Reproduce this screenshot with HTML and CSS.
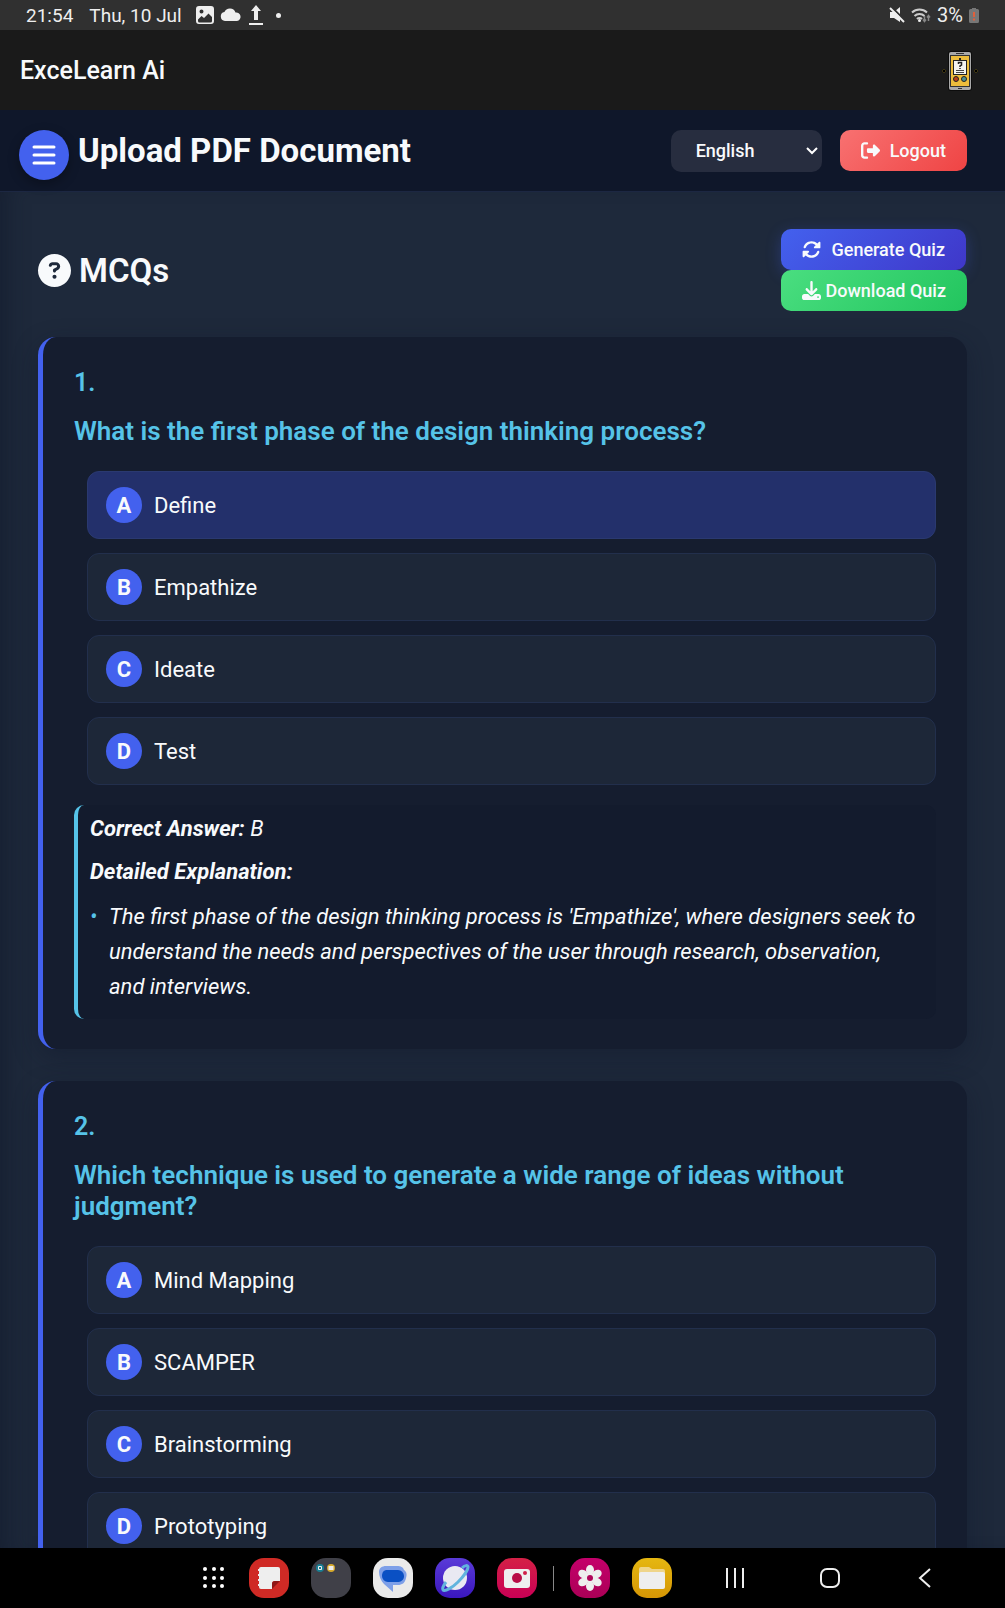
FILE: index.html
```html
<!DOCTYPE html>
<html lang="en">
<head>
    <meta charset="UTF-8">
    <meta name="viewport" content="width=device-width, initial-scale=1.0">
    <title>ExceLearn Ai</title>
    <link rel="stylesheet" href="styles.css">
</head>
<body>

    <!-- Status bar -->
    <div class="status-bar">
        <span>21:54</span>
        <span class="date">Thu, 10 Jul</span>
        <svg width="18" height="18" viewBox="0 0 18 18"><path fill="#eee" fill-rule="evenodd" d="M3 0h12a3 3 0 0 1 3 3v12a3 3 0 0 1-3 3H3a3 3 0 0 1-3-3V3a3 3 0 0 1 3-3zM2 13.500v1.500a1.500 1.500 0 0 0 1.500 1.500h11a1.500 1.500 0 0 0 1.500-1.500V11l-3.500-3.500L8 12l-2.500-2zM5.500 3.500a2 2 0 1 0 0 4 2 2 0 0 0 0-4z"/></svg>
        <svg width="22" height="14" viewBox="0 0 22 14"><path fill="#eee" d="M5 13a4.500 4.500 0 0 1-.6-8.900A6 6 0 0 1 15.500 4.500 4.300 4.300 0 0 1 17 13z"/></svg>
        <svg width="16" height="20" viewBox="0 0 16 20"><path fill="#eee" d="M8 0l5 6h-3v9H6V6H3zM1 18h14v2H1z"/></svg>
        <span class="dot"></span>
        <div class="status-right">
            <svg width="16" height="16" viewBox="0 0 16 16"><path fill="#eee" d="M1 5h4L11 0v15L5 11H1z"/><path stroke="#303030" stroke-width="2" d="M2.500 0L16 13.500"/><path stroke="#eee" stroke-width="2" d="M1 1l14 14"/></svg>
            <svg width="20" height="16" viewBox="0 0 20 16" fill="none"><path stroke="#ccc" stroke-width="2" d="M1 5.500a11 11 0 0 1 15 0M3.500 9a7 7 0 0 1 10 0M6 12a3.500 3.500 0 0 1 5 0"/><circle cx="8.500" cy="13.500" r="1.500" fill="#eee"/><path stroke="#888" stroke-width="1.500" d="M13.500 9v5M12 12.500l1.500 2 1.500-2M17.500 14V9M16 10.500l1.500-2 1.500 2"/></svg>
            <span class="battery">3%</span>
            <svg width="10" height="15" viewBox="0 0 10 15"><path fill="#777" d="M3 0h4v1h1.500A1.500 1.500 0 0 1 10 2.500v11a1.500 1.500 0 0 1-1.500 1.500h-7A1.500 1.500 0 0 1 0 13.500v-11A1.500 1.500 0 0 1 1.500 1H3z"/><path stroke="#e0603c" stroke-width="2" d="M5 4v5M5 10.500v2"/></svg>
        </div>
    </div>

    <!-- App bar -->
    <div class="app-bar">
        <span>ExceLearn Ai</span>
        <svg width="36" height="40" viewBox="0 0 36 40">
            <path fill="#000" stroke="#3d3512" d="M2 18l2 2-2 2-2-2zM34 18l2 2-2 2-2-2z"/>
            <rect x="6" y="0" width="24" height="40" rx="3" fill="#0c0c0c"/>
            <rect x="7" y="1" width="22" height="38" rx="2" fill="#a9a9a9"/>
            <path fill="#333" d="M14 2h8v1h-8zM16 37h4v1h-4zM8 4h20v32H8z"/>
            <rect x="9" y="5" width="18" height="30" fill="#edbd3c"/>
            <path fill="#222" d="M17 7h2v2h6v15H11V9h6z"/>
            <path fill="#f4f4f0" d="M12 10h12v13H12z"/>
            <path fill="none" stroke="#222" stroke-width="1.500" d="M16.500 13v-1.500h3V14L18 15v1M18 17v1"/>
            <path stroke="#444" d="M14 19.500h8M14 21.500h8"/>
            <circle cx="14" cy="28" r="2.500" fill="#b8401c" stroke="#222"/>
            <circle cx="22" cy="28" r="2.500" fill="#4d8f8f" stroke="#222"/>
        </svg>
    </div>

    <!-- Header -->
    <div class="header">
        <button class="menu-btn" aria-label="Menu">
            <svg width="24" height="22" viewBox="0 0 24 22"><path stroke="#fff" stroke-width="3" stroke-linecap="round" d="M2 3h20M2 11h20M2 19h20"/></svg>
        </button>
        <h1>Upload PDF Document</h1>
        <div class="select-wrap">
            <select aria-label="Language">
                <option>English</option>
            </select>
            <svg width="12" height="8" viewBox="0 0 12 8"><path fill="none" stroke="#fff" stroke-width="2" d="M1 1l5 5 5-5"/></svg>
        </div>
        <button class="btn logout">
            <svg width="19" height="19" viewBox="0 0 512 512"><path fill="currentColor" d="M377.900 105.900L500.700 228.700c7.200 7.200 11.300 17.100 11.300 27.300s-4.100 20.100-11.300 27.300L377.900 406.100c-6.400 6.400-15 9.900-24 9.900c-18.700 0-33.900-15.200-33.900-33.900l0-62.100-128 0c-17.700 0-32-14.300-32-32l0-64c0-17.700 14.300-32 32-32l128 0 0-62.100c0-18.700 15.200-33.900 33.900-33.900c9 0 17.600 3.600 24 9.900zM160 96L96 96c-17.700 0-32 14.300-32 32l0 256c0 17.700 14.300 32 32 32l64 0c17.700 0 32 14.300 32 32s-14.300 32-32 32l-64 0c-53 0-96-43-96-96L0 128C0 75 43 32 96 32l64 0c17.700 0 32 14.300 32 32s-14.300 32-32 32z"/></svg>
            Logout
        </button>
    </div>

    <!-- Quiz -->
    <div class="main">
        <div class="quiz-head">
            <h2>
                <svg width="33" height="33" viewBox="0 0 512 512"><path fill="currentColor" d="M256 512A256 256 0 1 0 256 0a256 256 0 1 0 0 512zM169.800 165.300c7.900-22.300 29.100-37.300 52.800-37.300h58.300c34.900 0 63.100 28.300 63.100 63.100c0 22.600-12.100 43.500-31.700 54.800L280 264.400c-.2 13-10.900 23.600-24 23.600c-13.300 0-24-10.700-24-24V250.500c0-8.600 4.600-16.500 12.100-20.800l44.300-25.400c4.700-2.700 7.600-7.700 7.600-13.100c0-8.400-6.800-15.100-15.100-15.100H222.600c-3.400 0-6.400 2.100-7.500 5.300l-.4 1.200c-4.400 12.500-18.200 19-30.600 14.600s-19-18.200-14.600-30.600l.4-1.200zM224 352a32 32 0 1 1 64 0 32 32 0 1 1 -64 0z"/></svg>
                MCQs
            </h2>
            <div class="quiz-actions">
                <button class="btn generate">
                    <svg width="19" height="19" viewBox="0 0 512 512"><path fill="currentColor" d="M142.900 142.900c62.200-62.200 162.700-62.500 225.300-1L327 183c-6.900 6.900-8.900 17.200-5.200 26.200s12.500 14.800 22.200 14.800H472c13.300 0 24-10.700 24-24V72c0-9.700-5.800-18.500-14.800-22.200s-19.300-1.700-26.200 5.200L413.400 96.600c-87.600-86.500-228.700-86.200-315.800 1C73.200 122 55.600 150.700 44.800 181.400c-5.900 16.700 2.900 34.900 19.500 40.800s34.900-2.900 40.800-19.500c7.700-21.800 20.200-42.300 37.800-59.800zM16 312V440c0 9.700 5.800 18.500 14.800 22.200s19.300 1.700 26.200-5.200l41.600-41.600c87.600 86.500 228.700 86.200 315.800-1c24.400-24.400 42.100-53.100 52.900-83.700c5.900-16.700-2.900-34.900-19.500-40.800s-34.900 2.900-40.800 19.500c-7.700 21.800-20.200 42.300-37.800 59.800c-62.200 62.200-162.700 62.500-225.300 1L185 329c6.900-6.900 8.900-17.200 5.200-26.200s-12.500-14.800-22.200-14.800H40c-13.300 0-24 10.700-24 24z"/></svg>
                    Generate Quiz
                </button>
                <button class="btn download">
                    <svg width="19" height="19" viewBox="0 0 512 512"><path fill="currentColor" d="M288 32c0-17.700-14.300-32-32-32s-32 14.300-32 32V274.700l-73.400-73.400c-12.500-12.500-32.800-12.500-45.300 0s-12.500 32.800 0 45.300l128 128c12.500 12.500 32.800 12.500 45.300 0l128-128c12.500-12.500 12.500-32.800 0-45.300s-32.800-12.500-45.300 0L288 274.700V32zM64 352c-35.300 0-64 28.700-64 64v32c0 35.300 28.700 64 64 64H448c35.300 0 64-28.700 64-64V416c0-35.300-28.700-64-64-64H346.500l-45.300 45.300c-25 25-65.500 25-90.500 0L165.500 352H64zm368 56a24 24 0 1 1 0 48 24 24 0 1 1 0-48z"/></svg>
                    Download Quiz
                </button>
            </div>
        </div>

        <div class="card">
            <div class="number">1.</div>
            <h3>What is the first phase of the design thinking process?</h3>
            <div class="options">
                <button class="option selected"><span class="letter">A</span>Define</button>
                <button class="option"><span class="letter">B</span>Empathize</button>
                <button class="option"><span class="letter">C</span>Ideate</button>
                <button class="option"><span class="letter">D</span>Test</button>
            </div>
            <div class="explanation">
                <p><strong>Correct Answer:</strong> B</p>
                <p><strong>Detailed Explanation:</strong></p>
                <ul>
                    <li>The first phase of the design thinking process is 'Empathize', where designers seek to understand the needs and perspectives of the user through research, observation, and interviews.</li>
                </ul>
            </div>
        </div>

        <div class="card">
            <div class="number">2.</div>
            <h3>Which technique is used to generate a wide range of ideas without judgment?</h3>
            <div class="options">
                <button class="option"><span class="letter">A</span>Mind Mapping</button>
                <button class="option"><span class="letter">B</span>SCAMPER</button>
                <button class="option"><span class="letter">C</span>Brainstorming</button>
                <button class="option"><span class="letter">D</span>Prototyping</button>
            </div>
        </div>
    </div>

    <!-- Taskbar -->
    <div class="taskbar">
        <div class="apps">
            <button aria-label="All apps">
                <svg width="22" height="22" viewBox="0 0 22 22" fill="#fff"><circle cx="2" cy="2" r="2"/><circle cx="11" cy="2" r="2"/><circle cx="19" cy="2" r="2"/><circle cx="2" cy="11" r="2"/><circle cx="11" cy="11" r="2"/><circle cx="19" cy="11" r="2"/><circle cx="2" cy="19" r="2"/><circle cx="11" cy="19" r="2"/><circle cx="19" cy="19" r="2"/></svg>
            </button>
            <button class="app notes" aria-label="Notes">
                <svg width="40" height="40" viewBox="0 0 40 40"><path fill="#eee" d="M12 9h17a2 2 0 0 1 2 2v12h-5a3 3 0 0 0-3 3v5H12a2 2 0 0 1-2-2v-1H9v-2h1v-3H9v-2h1v-3H9v-2h1v-3H9v-2h1a2 2 0 0 1 2-2z"/><path fill="#8f1616" d="M23 31v-5a3 3 0 0 1 3-3h5z"/></svg>
            </button>
            <button class="app folder" aria-label="Folder">
                <svg width="40" height="40" viewBox="0 0 40 40"><circle cx="9" cy="10" r="4" fill="#187d92"/><path fill="none" stroke="#eee" d="M7.500 8.500h3v3h-3z"/><circle cx="20" cy="10" r="4" fill="#d5a82c"/><path fill="#eee" d="M17.500 8h5v4h-5z"/></svg>
            </button>
            <button class="app messages" aria-label="Messages">
                <svg width="40" height="40" viewBox="0 0 40 40"><path fill="#7d9fe8" d="M13 8h11c4 0 6 1 7 4 3 2 3 5 2 8-1 5-4 7-8 7h-5v7l-9-8C8 23 6 18 6 14c0-4 3-6 7-6z"/><path fill="#0a50c4" d="M14 12h11a6 6 0 0 1 6 6c0 4-3 6-7 6H15a6 6 0 0 1-6-6c0-4 2-6 5-6z"/></svg>
            </button>
            <button class="app internet" aria-label="Internet">
                <svg width="40" height="40" viewBox="0 0 40 40"><circle cx="20" cy="20" r="12" fill="#e9e9f2"/><path fill="none" stroke="#62b4de" stroke-width="3" d="M27 10c3-3 6-3 6-1 0 3-5 10-10 15S10 34 8 32c-1-1 0-4 3-8"/></svg>
            </button>
            <button class="app camera" aria-label="Camera">
                <svg width="40" height="40" viewBox="0 0 40 40"><rect x="7" y="11" width="26" height="19" rx="3" fill="#eee"/><circle cx="20" cy="20" r="5" fill="#b80d46"/><circle cx="28" cy="15" r="2" fill="#cf1f48"/></svg>
            </button>
            <span class="divider"></span>
            <button class="app gallery" aria-label="Gallery">
                <svg width="40" height="40" viewBox="0 0 40 40" fill="#eee"><ellipse cx="20" cy="12" rx="4" ry="5"/><ellipse cx="20" cy="12" rx="4" ry="5" transform="rotate(60 20 20)"/><ellipse cx="20" cy="12" rx="4" ry="5" transform="rotate(120 20 20)"/><ellipse cx="20" cy="12" rx="4" ry="5" transform="rotate(180 20 20)"/><ellipse cx="20" cy="12" rx="4" ry="5" transform="rotate(240 20 20)"/><ellipse cx="20" cy="12" rx="4" ry="5" transform="rotate(300 20 20)"/><circle cx="20" cy="20" r="5"/><circle cx="20" cy="20" r="3" fill="#b0065a"/></svg>
            </button>
            <button class="app files" aria-label="My Files">
                <svg width="40" height="40" viewBox="0 0 40 40"><path fill="#efd58a" d="M9 9h8l3 2h11a2 2 0 0 1 2 2v4H7v-6a2 2 0 0 1 2-2z"/><rect x="7" y="14" width="26" height="17" rx="2" fill="#eee"/></svg>
            </button>
        </div>
        <div class="nav-keys">
            <button aria-label="Recents"><svg width="20" height="20" viewBox="0 0 20 20"><path stroke="#eee" stroke-width="2" d="M2 0v20M10 0v20M18 0v20"/></svg></button>
            <button aria-label="Home"><svg width="20" height="20" viewBox="0 0 20 20"><rect x="1" y="1" width="18" height="18" rx="6" fill="none" stroke="#eee" stroke-width="2"/></svg></button>
            <button aria-label="Back"><svg width="20" height="20" viewBox="0 0 20 20"><path fill="none" stroke="#eee" stroke-width="2" d="M15 1l-10 9 10 9"/></svg></button>
        </div>
    </div>

</body>
</html>
```
FILE: styles.css
```css
/* General styles */
* {
    box-sizing: border-box;
}
body {
    font-family: Roboto, sans-serif;
    margin: 0;
    height: 100vh;
    display: flex;
    flex-direction: column;
    overflow: hidden;
    background-color: #1e293b;
    color: #f8fafc;
}
button, select {
    font-family: inherit;
    color: inherit;
    border: none;
    cursor: pointer;
}
h1, h2, h3, p, ul {
    margin: 0;
    padding: 0;
}
svg {
    display: block;
    flex-shrink: 0;
}

/* Status bar */
.status-bar {
    flex: none;
    display: flex;
    align-items: center;
    gap: 6px;
    height: 30px;
    padding: 0 26px;
    background-color: #303030;
    color: #eee;
    font-size: 19px;
}
.date {
    margin: 0 8px 0 10px;
}
.dot {
    width: 5px;
    height: 5px;
    margin-left: 6px;
    border-radius: 50%;
    background-color: #eee;
}
.status-right {
    display: flex;
    align-items: center;
    gap: 6px;
    margin-left: auto;
}
.battery {
    font-size: 20px;
}

/* App bar */
.app-bar {
    flex: none;
    display: flex;
    align-items: center;
    justify-content: space-between;
    height: 80px;
    padding: 1px 27px 0 20px;
    background-color: #1a1a1a;
    font-size: 25px;
    font-weight: 500;
}

/* Header */
.header {
    flex: none;
    display: flex;
    align-items: center;
    height: 82px;
    padding: 0 38px 0 19px;
    background-color: #0f172a;
    border-bottom: 1px solid #1c2742;
}
.menu-btn {
    display: flex;
    align-items: center;
    justify-content: center;
    width: 50px;
    height: 50px;
    margin-top: 8px;
    padding: 0;
    border-radius: 50%;
    background-color: #4361ee;
    box-shadow: 0 4px 12px rgba(0, 0, 0, 0.3);
}
h1 {
    margin-left: 9px;
    font-size: 33px;
    font-weight: 700;
}
.select-wrap {
    display: grid;
    align-items: center;
    margin-left: auto;
    margin-right: 18px;
}
.select-wrap select, .select-wrap svg {
    grid-area: 1 / 1;
}
.select-wrap svg {
    justify-self: end;
    margin-right: 4px;
    pointer-events: none;
}
select {
    appearance: none;
    width: 151px;
    height: 42px;
    padding: 0 25px;
    border-radius: 10px;
    background-color: #272d3f;
    font-size: 18px;
    font-weight: 500;
}

/* Buttons */
.btn {
    display: flex;
    align-items: center;
    height: 41px;
    padding: 0 21px;
    border-radius: 10px;
    font-size: 18px;
    font-weight: 500;
}
.logout {
    gap: 10px;
    background: linear-gradient(135deg, #f87171, #ef4444);
}
.generate {
    gap: 10px;
    background: linear-gradient(135deg, #4361ee, #3f37c9);
    box-shadow: 0 4px 15px rgba(67, 97, 238, 0.3);
}
.download {
    gap: 4px;
    background: linear-gradient(135deg, #4ade80, #22c55e);
}

/* Quiz section */
.main {
    flex: 1;
    min-height: 0;
    overflow: hidden;
    padding: 37px 38px 0;
    box-shadow: inset 20px 0 20px -12px rgba(15, 23, 42, 0.5);
}
.quiz-head {
    display: flex;
    align-items: center;
    justify-content: space-between;
    margin-bottom: 26px;
}
h2 {
    display: flex;
    align-items: center;
    gap: 8px;
    font-size: 33px;
    font-weight: 600;
}
.quiz-actions {
    display: flex;
    flex-direction: column;
    align-items: flex-start;
}
.card {
    margin-bottom: 32px;
    padding: 30px 31px;
    border-left: 5px solid #4361ee;
    border-radius: 18px;
    background-color: #151d2f;
    box-shadow: 0 8px 24px rgba(15, 23, 42, 0.4);
}
.number, h3 {
    color: #56c3e8;
    font-size: 26px;
    font-weight: 600;
    line-height: 31px;
}
.number {
    margin-bottom: 18px;
    font-size: 25px;
}
.options {
    display: flex;
    flex-direction: column;
    gap: 14px;
    margin: 24px 0 20px 13px;
}
.option {
    display: flex;
    align-items: center;
    gap: 12px;
    height: 68px;
    padding: 0 18px;
    border: 1px solid #222f4c;
    border-radius: 12px;
    background-color: #1d2738;
    font-size: 22px;
}
.option.selected {
    border-color: #2a3970;
    background-color: #23306b;
}
.letter {
    display: flex;
    align-items: center;
    justify-content: center;
    width: 36px;
    height: 36px;
    border-radius: 50%;
    background-color: #4361ee;
    font-weight: 700;
}

/* Explanation */
.explanation {
    padding: 6px 17px 15px 12px;
    border-left: 4px solid #56c3e8;
    border-radius: 10px;
    background-color: #131b2d;
    font-size: 22px;
    font-style: italic;
    line-height: 35px;
}
.explanation p {
    margin-bottom: 8px;
}
.explanation ul {
    margin-top: 10px;
    list-style: none;
}
.explanation li {
    position: relative;
    padding-left: 19px;
}
.explanation li::before {
    content: "•";
    position: absolute;
    left: 0;
    color: #56c3e8;
    font-size: 22px;
}

/* Taskbar */
.taskbar {
    flex: none;
    display: flex;
    align-items: center;
    justify-content: space-between;
    height: 60px;
    padding: 0 70px 0 203px;
    background-color: #000;
}
.taskbar button {
    padding: 0;
    background-color: transparent;
}
.apps {
    display: flex;
    align-items: center;
    gap: 22px;
}
.taskbar .app {
    width: 40px;
    height: 40px;
    border-radius: 15px;
}
.taskbar .notes {
    margin-left: 2px;
    background-color: #cf2a25;
}
.taskbar .folder {
    background-color: #404048;
}
.taskbar .messages {
    background-color: #eaeaea;
}
.taskbar .internet {
    background: linear-gradient(#5a3bd8, #3a16bd);
}
.taskbar .camera {
    background: linear-gradient(#d42046, #c90055);
}
.taskbar .gallery {
    background: linear-gradient(#c4006b, #ab0057);
}
.taskbar .files {
    background: linear-gradient(#e5b711, #d69605);
}
.divider {
    width: 1px;
    height: 25px;
    margin: 0 -6px;
    background-color: #888;
}
.nav-keys {
    display: flex;
    gap: 75px;
}
```
